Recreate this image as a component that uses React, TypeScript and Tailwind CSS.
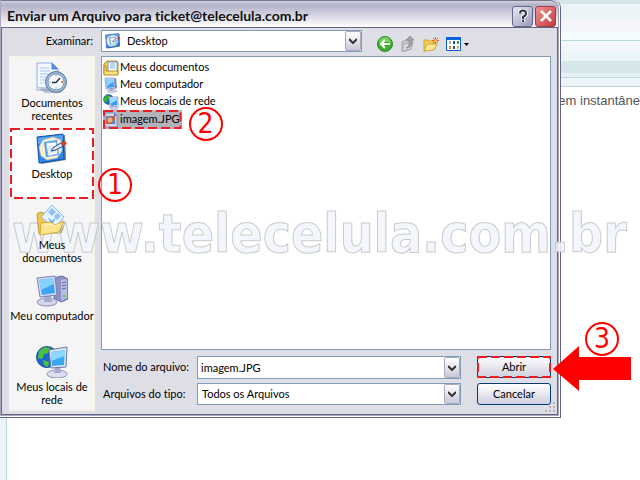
import type { ReactNode } from "react"

const RecentIcon = () => (
  <svg viewBox="0 0 32 32" className="w-8 h-8">
    <path d="M1 1h15l6 6v21H1z" fill="#f4f8ff" stroke="#8fb0e8" />
    <path d="M16 1v6h6z" fill="#5f96ea" stroke="#4a80d8" />
    <path d="M4 6h9M4 9h10M4 12h9M4 15h6M4 18h5M4 21h4" stroke="#a9c6f3" />
    <path d="M1 25l8 6h16l5-6z" fill="#5a6a86" opacity=".35" />
    <circle cx="20" cy="20" r="10.5" fill="#9db8d6" stroke="#5b7596" />
    <circle cx="20" cy="20" r="8" fill="#f7fbff" stroke="#7897b8" />
    <path d="M20 13.500v1M20 25.500v1M13.500 20h1" stroke="#49689a" />
    <path d="M25 20h2" stroke="#f08030" strokeWidth="2" />
    <path d="M24 16l-4 4.500h-4" stroke="#26364c" strokeWidth="1.500" fill="none" />
  </svg>
)

const DesktopIcon = ({ className }: { className: string }) => (
  <svg viewBox="0 0 32 32" className={className}>
    <path d="M4 5l25-3 1 25-25 4z" fill="#123f8c" opacity=".7" />
    <path d="M1 4l26-3 1 25-25 4z" fill="#2f86ea" stroke="#1450a8" />
    <path d="M2 5l25-3v5L2 11z" fill="#74b8fa" opacity=".6" />
    <path d="M3 14l4-7 10-3 8 3 1 11-5 7-10 2-6-4z" fill="#f6efcf" stroke="#c9c39a" strokeWidth=".5" />
    <path d="M8 9l13-2 2 15-13 2z" fill="#4a98f0" />
    <path d="M10 10l10-1 2 12-10 2z" fill="#fff" stroke="#8db8f2" />
    <path d="M12 13l6-1 2 7-7 2z" fill="#d7eaff" />
    <path d="M15 18l3-4 7-4 2 3-7 4z" fill="#d9e6f5" stroke="#2b4d84" />
    <path d="M25 10l4-2 2 3-4 2z" fill="#e33a1c" />
  </svg>
)

const DocumentsIcon = () => (
  <svg viewBox="0 0 32 32" className="w-8 h-8">
    <path d="M6 30h17l7-14-4 13z" fill="#6b6242" opacity=".5" />
    <path d="M1 10l3-2 6 2 14-1 1 17L3 30z" fill="#f0c94e" stroke="#c49a2c" />
    <path d="M16 1l12 12-9 12L5 13z" fill="#e5f2ff" stroke="#88b5ee" />
    <path d="M16 4l4 4-4 4-4-4zM22 9l3 3-4 4-3-4z" fill="#8fc2fa" />
    <path d="M12 13l4 4 4-4-4 8z" fill="#5c9eee" />
    <path d="M5 19l10-1 4 3 9-4-5 11-19 3z" fill="#fbe58c" stroke="#d1a93d" />
    <path d="M7 22l8-2 4 2 5-2" stroke="#fff7cf" fill="none" />
  </svg>
)

const ComputerIcon = () => (
  <svg viewBox="0 0 32 32" className="w-8 h-8">
    <path d="M18 3l8-2 6 3v20l-7 3-7-4z" fill="#8c92c8" stroke="#666ca4" />
    <path d="M25 5l6-1v19l-6 3z" fill="#b7bbe2" />
    <path d="M26 8l4-1M26 11l4-1M26 14l4-1" stroke="#6167a0" />
    <path d="M27 21h2" stroke="#58d246" strokeWidth="2" />
    <ellipse cx="11" cy="27" rx="10" ry="4" fill="#d3d6e8" stroke="#8b90b4" />
    <path d="M9 20h6l1 7H8z" fill="#a5aac9" />
    <path d="M1 3l18-2 2 19-17 2z" fill="#d9dcee" stroke="#797fae" />
    <path d="M3 5l14-2 2 15-13 2z" fill="#3aa5f5" />
    <path d="M3 5l14-2 1 6L5 15z" fill="#86d2ff" />
  </svg>
)

const SmallComputerIcon = () => (
  <svg viewBox="0 0 16 16" className="w-4 h-4">
    <path d="M10 2l3-1 1 10-3 1z" fill="#7d84b8" />
    <ellipse cx="9" cy="14" rx="5" ry="1.500" fill="#d3d6e8" stroke="#9ba0c0" strokeWidth=".5" />
    <path d="M7 11h3v3H7z" fill="#a5aac9" />
    <path d="M2 1h9l1 10-9 1z" fill="#dfe2f2" stroke="#7f92c4" strokeWidth=".75" />
    <path d="M3 2h7l1 8-7 1z" fill="#3a9df2" />
    <path d="M3 2h7v3l-6 4z" fill="#8fd3ff" />
  </svg>
)

const NetworkIcon = () => (
  <svg viewBox="0 0 32 32" className="w-8 h-8">
    <circle cx="11" cy="11" r="10.500" fill="#1e68cc" stroke="#194f9c" />
    <path d="M3 5l6-4 5 1-2 5-4 1-2 5-4-1zM7 14l6 2-1 5-4-2z" fill="#4fc238" />
    <ellipse cx="21" cy="28" rx="10" ry="4" fill="#dcdff0" stroke="#8b90b4" />
    <path d="M19 21h5l1 6h-7z" fill="#a5aac9" />
    <path d="M13 4l18-3-1 20-15 1z" fill="#e3e6f4" stroke="#6f76a6" />
    <path d="M15 6l14-2-1 15-12 1z" fill="#39a8f2" />
    <path d="M15 6l14-2v6l-14 5z" fill="#8ad7ff" />
  </svg>
)

const SmallNetworkIcon = () => (
  <svg viewBox="0 0 16 16" className="w-4 h-4">
    <circle cx="5.500" cy="5.500" r="5" fill="#1c5fc0" stroke="#194f9c" strokeWidth=".5" />
    <path d="M1 4l3-3 3 1-1 3-2 1v3L1 7z" fill="#35b52c" />
    <ellipse cx="11" cy="14" rx="4.500" ry="1.500" fill="#d3d6e8" stroke="#9ba0c0" strokeWidth=".5" />
    <path d="M6 3h9v9l-8 1z" fill="#e3e6f4" stroke="#7f92c4" strokeWidth=".75" />
    <path d="M7 4h7v7l-6 1z" fill="#3a9df2" />
    <path d="M7 4h7v2l-7 4z" fill="#9ddaff" />
  </svg>
)

const FolderDocIcon = () => (
  <svg viewBox="0 0 16 16" className="w-4 h-4">
    <path d="M1 4l3-3h10l1 2v11H1z" fill="#f6cf4c" stroke="#b98b1e" />
    <path d="M5 2h9v10H5z" fill="#fff" stroke="#6f9ad8" />
    <path d="M7 4h5M7 6h5M7 8h5" stroke="#79aaf0" />
    <path d="M1 6h2v5h12v4H1z" fill="#fce382" stroke="#b98b1e" />
  </svg>
)

const ImageFileIcon = () => (
  <svg viewBox="0 0 16 16" className="w-4 h-4">
    <path d="M2 1h9l3 3v11H2z" fill="#cfd6ea" stroke="#7d8fb8" />
    <path d="M11 1v3h3z" fill="#5577c0" />
    <path d="M3 4h9v8H3z" fill="#b9634a" />
    <path d="M3 4h4v2H3zM9 9h3v3H9z" fill="#5d83c4" />
    <circle cx="7" cy="8" r="2.500" fill="#eeb089" />
  </svg>
)

const Chevron = () => (
  <span className="pointer-events-none absolute inset-y-px right-px flex w-4 items-center justify-center rounded-xs border border-[#a9a9bd] bg-linear-to-b from-white to-[#c9c9d9]">
    <svg viewBox="0 0 8 6" className="w-2 h-1.5">
      <path d="M0 1l4 4 4-4" fill="none" stroke="#333" strokeWidth="2" />
    </svg>
  </span>
)

const DashedFrame = () => (
  <svg className="pointer-events-none absolute inset-px h-[calc(100%-2px)] w-[calc(100%-2px)] overflow-visible">
    <rect width="100%" height="100%" fill="none" stroke="#f01c24" strokeWidth="2" strokeDasharray="9 4" />
  </svg>
)

const Step = ({ children, className }: { children: ReactNode; className: string }) => (
  <span
    className={`pointer-events-none absolute z-10 flex h-[34px] w-[34px] items-center justify-center rounded-full border-2 border-[#ff0000] font-['DejaVu_Sans_Condensed','DejaVu_Sans',sans-serif] text-[28px] leading-none text-[#ff0000] ${className}`}
  >
    {children}
  </span>
)

const places = [
  { name: "Documentos recentes", icon: <RecentIcon /> },
  { name: "Desktop", icon: <DesktopIcon className="w-8 h-8" />, active: true },
  { name: "Meus documentos", icon: <DocumentsIcon /> },
  { name: "Meu computador", icon: <ComputerIcon /> },
  { name: "Meus locais de rede", icon: <NetworkIcon /> },
]

const files = [
  { name: "Meus documentos", icon: <FolderDocIcon /> },
  { name: "Meu computador", icon: <SmallComputerIcon /> },
  { name: "Meus locais de rede", icon: <SmallNetworkIcon /> },
]

const Toolbar = () => (
  <div className="flex items-center gap-[7px] pt-1.5 pl-[15px]">
    <button aria-label="Voltar">
      <svg viewBox="0 0 16 16" className="w-4 h-4">
        <circle cx="8" cy="8" r="7.500" fill="#3fb02c" stroke="#2c8a20" />
        <path d="M2 7a6 6 0 0 1 12 0q-6-3-12 0z" fill="#79d062" />
        <path d="M13 8H4M8 4L4 8l4 4" fill="none" stroke="#fff" strokeWidth="2" />
      </svg>
    </button>
    <button aria-label="Um nível acima">
      <svg viewBox="0 0 16 16" className="w-4 h-4">
        <path d="M2 6l3-2 2 1 4-1v9l-8 3-1-1z" fill="#c9c9cb" stroke="#a8a8ac" />
        <path d="M2 15l2-7 9-2-2 7z" fill="#dededf" stroke="#a8a8ac" />
        <path d="M6 12q4-1 3-8H6l4-4 4 4h-2q1 8-6 8z" fill="#a6a6aa" stroke="#85858b" strokeWidth=".75" />
      </svg>
    </button>
    <button aria-label="Criar nova pasta">
      <svg viewBox="0 0 16 16" className="w-4 h-4">
        <path d="M1 4h4l1 1h6v8l-11 2z" fill="#f4cc55" stroke="#d0a53a" />
        <path d="M1 15l3-7h10l-3 6z" fill="#fde68e" stroke="#d0a53a" />
        <path d="M12.500 1v7M9 4.500h7M10 2l5 5M15 2l-5 5" stroke="#f2542a" />
        <circle cx="12.500" cy="4.500" r="1.500" fill="#ffc560" />
      </svg>
    </button>
    <button aria-label="Menu exibir" className="flex items-center gap-0.5">
      <svg viewBox="0 0 16 16" className="w-4 h-4">
        <path d="M.500 1.500h14v13H.500z" fill="#fff" stroke="#0a5bd0" />
        <path d="M0 1h15v3H0z" fill="#0a64dc" />
        <path d="M3 5h2v3H3z" fill="#a9a9c8" />
        <path d="M7 5h2v3H7zM7 10h2v3H7z" fill="#1c4ea8" />
        <path d="M11 5h2v3h-2z" fill="#3a9c3a" />
        <path d="M3 10h2v3H3z" fill="#ef7d32" />
        <path d="M11 10h2v3h-2z" fill="#d8b04a" />
      </svg>
      <svg viewBox="0 0 5 3" className="w-[5px] h-[3px]">
        <path d="M0 0h5L2.500 3z" fill="#000" />
      </svg>
    </button>
  </div>
)

const Dialog = () => (
  <section
    aria-label="Enviar um Arquivo"
    className="absolute top-0 left-0 right-[79px] rounded-tr-lg border-r border-b border-[#66657f] bg-white pr-px pb-px"
  >
    <div className="rounded-tr-lg border-r border-b border-l border-[#a9a8c0] bg-[#dedee6]">
      <header className="flex h-[27px] items-center gap-0.5 rounded-tr-lg border-t border-[#77768f] bg-linear-to-b from-[#d4d4e0] via-[#b2b1c8] via-15% to-white pr-0.5 pl-1.5">
        <h1 className="flex-1 whitespace-nowrap pt-1 text-[14px] leading-5 font-bold text-[#111]">
          Enviar um Arquivo para ticket@telecelula.com.br
        </h1>
        <button
          aria-label="Ajuda"
          className="mt-1 flex h-[21px] w-[21px] items-center justify-center rounded-[3px] border border-[#66668a] bg-linear-to-br from-[#e9e9f3] to-[#9a9abb]"
        >
          <svg viewBox="0 0 12 14" className="w-3 h-3.5">
            <path d="M3 4.500q0-3 3-3t3 3q0 2-3 3.500v2M6 11v2" fill="none" stroke="#fff" strokeWidth="4" />
            <path d="M3 4.500q0-3 3-3t3 3q0 2-3 3.500v2M6 11v2" fill="none" stroke="#34344f" strokeWidth="2" />
          </svg>
        </button>
        <button
          aria-label="Fechar"
          className="mt-1 flex h-[21px] w-[21px] items-center justify-center rounded-[3px] border border-[#a03c48] bg-linear-to-br from-[#ee9090] to-[#c5383f]"
        >
          <svg viewBox="0 0 12 12" className="w-3 h-3">
            <path d="M1 1l10 10M11 1L1 11" stroke="#fff" strokeWidth="2.500" />
          </svg>
        </button>
      </header>

      <div className="border border-[#66657f] pr-1.5 pb-px pl-[7px]">
        <div className="flex items-center pt-0.5">
          <label htmlFor="folder" className="w-[92px] pr-2 text-right">
            Examinar:
          </label>
          <div className="relative w-[261px]">
            <DesktopIcon className="pointer-events-none absolute top-[3px] left-1 h-4 w-4" />
            <select
              id="folder"
              className="block h-[22px] w-full appearance-none border border-[#7f9db9] bg-white pl-[25px]"
            >
              <option>Desktop</option>
            </select>
            <Chevron />
          </div>
          <Toolbar />
        </div>

        <div className="flex gap-1.5 pt-1">
          <nav className="mb-0.5 w-[86px] shrink-0 border border-[#f5f0df] bg-[#f5f5f5]">
            {places.map((place) => (
              <button
                key={place.name}
                className={`relative flex h-[71px] w-full flex-col items-center gap-0.5 pt-[5px] leading-[13px] last:h-[69px] ${place.active ? "bg-white" : ""}`}
              >
                <span className="relative z-30">{place.icon}</span>
                <span className="relative z-30">{place.name}</span>
                {place.active && (
                  <>
                    <DashedFrame />
                    <Step className="top-10 left-full ml-1">1</Step>
                  </>
                )}
              </button>
            ))}
          </nav>

          <div className="flex flex-1 flex-col">
            <ul className="flex-1 border border-[#7f9db9] bg-white pt-0.5 pl-px">
              {files.map((file) => (
                <li key={file.name}>
                  <button className="flex h-[17px] items-center gap-px whitespace-nowrap">
                    {file.icon}
                    {file.name}
                  </button>
                </li>
              ))}
              <li>
                <button className="relative flex h-[19px] items-center gap-px bg-[#b2b2bb] pr-0.5">
                  <ImageFileIcon />
                  imagem.JPG
                  <DashedFrame />
                  <Step className="-top-[3px] left-full ml-[7px]">2</Step>
                </button>
              </li>
            </ul>

            <form className="flex gap-4 pt-1.5 pb-2" onSubmit={(e) => e.preventDefault()}>
              <div className="flex flex-1 flex-col gap-1">
                <div className="flex items-center">
                  <label htmlFor="filename" className="w-24 pl-0.5 whitespace-nowrap">
                    Nome do arquivo:
                  </label>
                  <div className="relative flex-1">
                    <input
                      id="filename"
                      defaultValue="imagem.JPG"
                      className="block h-[23px] w-full border border-[#7f9db9] bg-white pl-[3px]"
                    />
                    <Chevron />
                  </div>
                </div>
                <div className="flex items-center">
                  <label htmlFor="filetype" className="w-24 pl-0.5 whitespace-nowrap">
                    Arquivos do tipo:
                  </label>
                  <div className="relative flex-1">
                    <select
                      id="filetype"
                      className="block h-[22px] w-full appearance-none border border-[#7f9db9] bg-white pl-1"
                    >
                      <option>Todos os Arquivos</option>
                    </select>
                    <Chevron />
                  </div>
                </div>
              </div>
              <div className="flex w-[74px] flex-col gap-[5px]">
                <div className="relative">
                  <button className="block h-[22px] w-full rounded-[3px] border border-[#003c74] bg-linear-to-b from-white to-[#cfcfe0]">
                    Abrir
                  </button>
                  <DashedFrame />
                  <svg
                    viewBox="0 0 78 46"
                    className="pointer-events-none absolute -top-2.5 left-full z-10 ml-0.5 h-[46px] w-[78px]"
                  >
                    <path d="M0 23L26 0v11h52v23H26v11z" fill="#ff0000" />
                  </svg>
                  <Step className="-top-[34px] left-full ml-[34px]">3</Step>
                </div>
                <button className="h-[22px] rounded-[3px] border border-[#003c74] bg-linear-to-b from-white to-[#cfcfe0]">
                  Cancelar
                </button>
              </div>
            </form>
          </div>
        </div>
      </div>
    </div>
    <svg viewBox="0 0 12 12" className="absolute right-1 bottom-1 w-3 h-3">
      <path d="M9 1h2v2H9zM5 5h2v2H5zM9 5h2v2H9zM1 9h2v2H1zM5 9h2v2H5zM9 9h2v2H9z" fill="#b9b8b4" />
    </svg>
  </section>
)

const App = () => {
  return (
    <main className="relative flex min-h-screen flex-col overflow-hidden bg-white font-['Lato',sans-serif] text-[11px] text-black [font-variant-ligatures:none]">
      <div className="h-1 bg-[#d5e6ea]" />
      <div className="h-4 bg-[#ebf4f7]" />
      <div className="h-3 bg-[#f4f6fc]" />
      <div className="h-[9px] border-b border-[#b9d5de] bg-[#f4fcfe]" />
      <div className="h-1 bg-[#f5fafd]" />
      <div className="h-1.5 bg-[#f3f5fc]" />
      <div className="h-2.5 bg-[#ebf4f7]" />
      <div className="h-3 bg-[#d5e7eb]" />
      <div className="h-[5px] border-b border-[#b9d5de] bg-[#e4f1f4]" />
      <div className="h-[9px] border-b border-[#b9d5de] bg-[#edf5f8]" />
      <div className="flex flex-1">
        <div className="w-[7px] border-r border-[#bcd6df] bg-[#edf5f8]" />
        <p className="flex-1 pt-1 text-right font-['Liberation_Sans',sans-serif] text-[13px] leading-5 text-[#555]">
          em instantâne
        </p>
      </div>

      <Dialog />

      <p className="pointer-events-none absolute top-[198px] left-3 z-20 font-['DejaVu_Sans_Condensed','DejaVu_Sans',sans-serif] text-[53px] leading-[72px] font-bold whitespace-nowrap text-[#f1f4fc]/85 [-webkit-text-stroke:1px_#b4b4b4aa]">
        www.telecelula.com.br
      </p>
    </main>
  )
}

export default App
